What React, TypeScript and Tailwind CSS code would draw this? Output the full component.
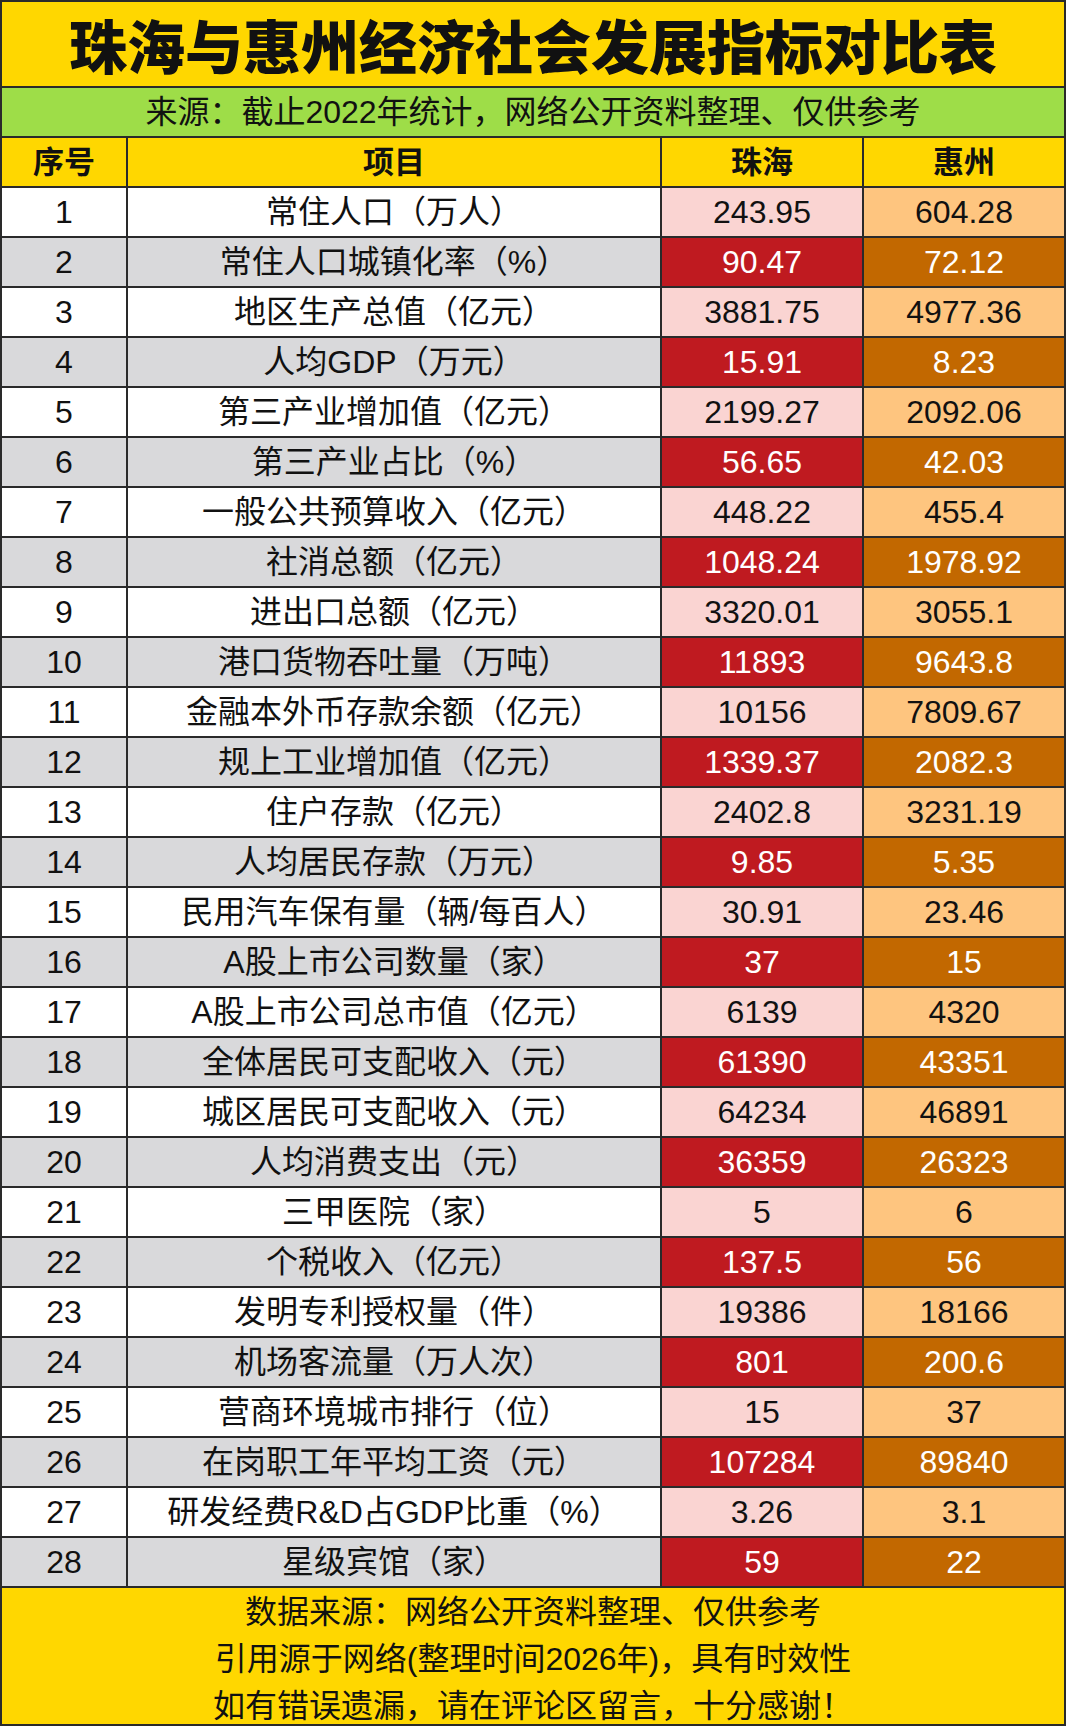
import React from "react";

const rows: [string, string, string][] = [
  ["常住人口（万人）", "243.95", "604.28"],
  ["常住人口城镇化率（%）", "90.47", "72.12"],
  ["地区生产总值（亿元）", "3881.75", "4977.36"],
  ["人均GDP（万元）", "15.91", "8.23"],
  ["第三产业增加值（亿元）", "2199.27", "2092.06"],
  ["第三产业占比（%）", "56.65", "42.03"],
  ["一般公共预算收入（亿元）", "448.22", "455.4"],
  ["社消总额（亿元）", "1048.24", "1978.92"],
  ["进出口总额（亿元）", "3320.01", "3055.1"],
  ["港口货物吞吐量（万吨）", "11893", "9643.8"],
  ["金融本外币存款余额（亿元）", "10156", "7809.67"],
  ["规上工业增加值（亿元）", "1339.37", "2082.3"],
  ["住户存款（亿元）", "2402.8", "3231.19"],
  ["人均居民存款（万元）", "9.85", "5.35"],
  ["民用汽车保有量（辆/每百人）", "30.91", "23.46"],
  ["A股上市公司数量（家）", "37", "15"],
  ["A股上市公司总市值（亿元）", "6139", "4320"],
  ["全体居民可支配收入（元）", "61390", "43351"],
  ["城区居民可支配收入（元）", "64234", "46891"],
  ["人均消费支出（元）", "36359", "26323"],
  ["三甲医院（家）", "5", "6"],
  ["个税收入（亿元）", "137.5", "56"],
  ["发明专利授权量（件）", "19386", "18166"],
  ["机场客流量（万人次）", "801", "200.6"],
  ["营商环境城市排行（位）", "15", "37"],
  ["在岗职工年平均工资（元）", "107284", "89840"],
  ["研发经费R&D占GDP比重（%）", "3.26", "3.1"],
  ["星级宾馆（家）", "59", "22"],
];

const cell = "flex items-center justify-center h-[48px] leading-none";

export default function App() {
  return (
    <div className="w-[1066px] bg-[#2a2a2a] p-[2px] flex flex-col gap-[2px] font-['Liberation_Sans','Noto_Sans_CJK_SC',sans-serif] text-[#111]">
      <div className="h-[84px] bg-[#FFD700] flex items-center justify-center text-[58px] font-black leading-none font-['Noto_Sans_CJK_SC',sans-serif]">
        珠海与惠州经济社会发展指标对比表
      </div>
      <div className="h-[48px] bg-[#9EDD48] flex items-center justify-center text-[32px] leading-none">
        来源：截止2022年统计，网络公开资料整理、仅供参考
      </div>
      <div className="grid grid-cols-[124px_532px_200px_200px] gap-[2px]">
        <div className={`${cell} bg-[#FFD700] text-[31px] font-bold`}>序号</div>
        <div className={`${cell} bg-[#FFD700] text-[31px] font-bold`}>项目</div>
        <div className={`${cell} bg-[#FFD700] text-[31px] font-bold`}>珠海</div>
        <div className={`${cell} bg-[#FFD700] text-[31px] font-bold`}>惠州</div>
      </div>
      {rows.map((r, i) => {
        const odd = i % 2 === 0;
        return (
          <div key={i} className="grid grid-cols-[124px_532px_200px_200px] gap-[2px] text-[32px]">
            <div className={`${cell} ${odd ? "bg-white" : "bg-[#D9D9DB]"}`}>{i + 1}</div>
            <div className={`${cell} ${odd ? "bg-white" : "bg-[#D9D9DB]"}`}>{r[0]}</div>
            <div className={`${cell} ${odd ? "bg-[#FAD4D2]" : "bg-[#BF1A20] text-white"}`}>{r[1]}</div>
            <div className={`${cell} ${odd ? "bg-[#FEC57F]" : "bg-[#C26800] text-white"}`}>{r[2]}</div>
          </div>
        );
      })}
      <div className="h-[136px] bg-[#FFD700] flex flex-col items-center justify-center text-[32px] leading-[47px] pt-[6px]">
        <div>数据来源：网络公开资料整理、仅供参考</div>
        <div>引用源于网络(整理时间2026年)，具有时效性</div>
        <div>如有错误遗漏，请在评论区留言，十分感谢！</div>
      </div>
    </div>
  );
}
